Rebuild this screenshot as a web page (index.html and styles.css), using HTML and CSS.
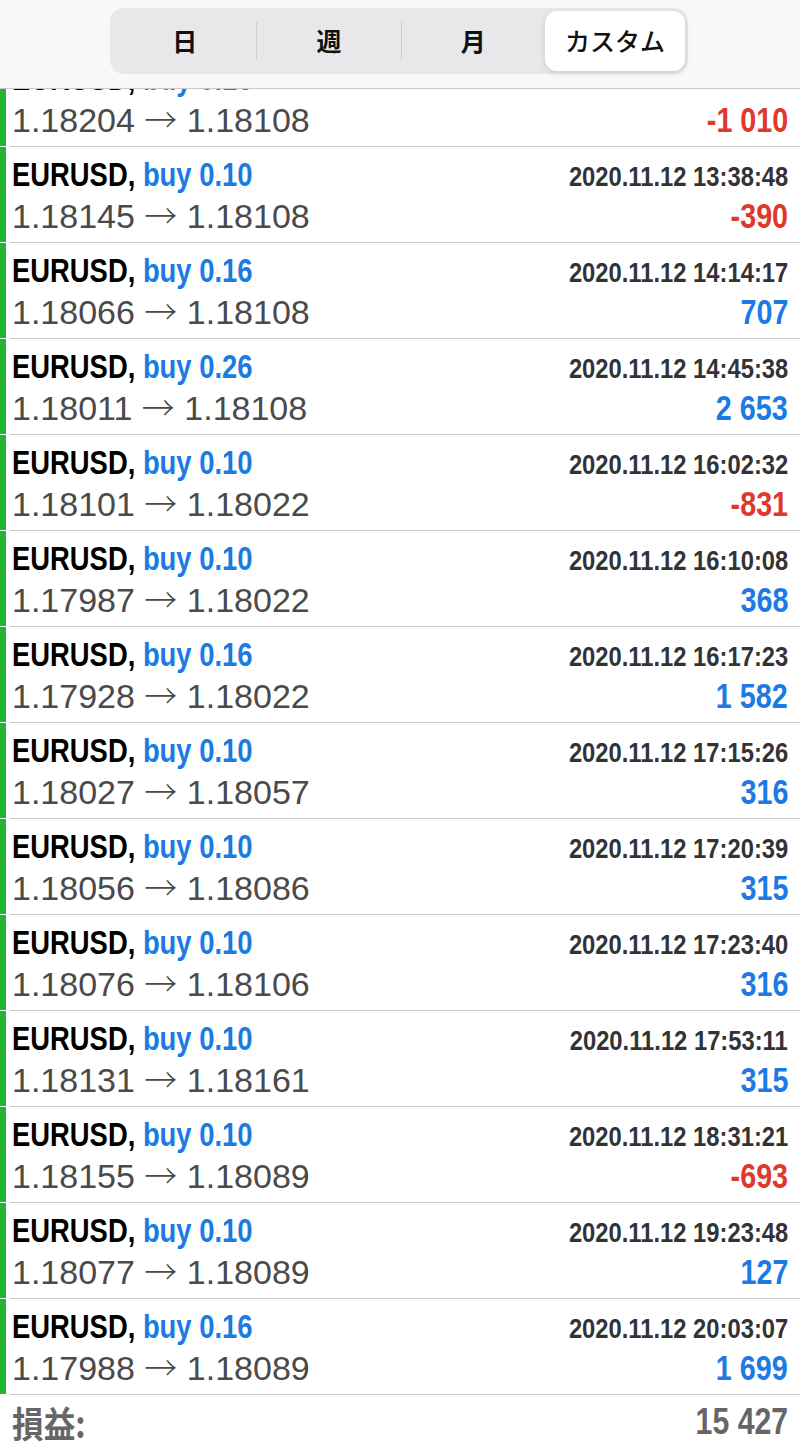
FILE: index.html
```html
<!DOCTYPE html>
<html lang="ja">
<head>
<meta charset="utf-8">
<link rel="stylesheet" href="styles.css">
</head>
<body>
<div class="page">
  <div class="list">
    <div class="row partial">
      <div class="line1"><span class="c sym">EURUSD, <span class="buy">buy 0.16</span></span><span class="c date"></span></div>
      <div class="line2"><span class="price">1.18204 <span class="arr">→</span> 1.18108</span><span class="c pl neg">-1 010</span></div>
    </div>
    <div class="row">
      <div class="line1"><span class="c sym">EURUSD, <span class="buy">buy 0.10</span></span><span class="c date">2020.11.12 13:38:48</span></div>
      <div class="line2"><span class="price">1.18145 <span class="arr">→</span> 1.18108</span><span class="c pl neg">-390</span></div>
    </div>
    <div class="row">
      <div class="line1"><span class="c sym">EURUSD, <span class="buy">buy 0.16</span></span><span class="c date">2020.11.12 14:14:17</span></div>
      <div class="line2"><span class="price">1.18066 <span class="arr">→</span> 1.18108</span><span class="c pl pos">707</span></div>
    </div>
    <div class="row">
      <div class="line1"><span class="c sym">EURUSD, <span class="buy">buy 0.26</span></span><span class="c date">2020.11.12 14:45:38</span></div>
      <div class="line2"><span class="price">1.18011 <span class="arr">→</span> 1.18108</span><span class="c pl pos">2 653</span></div>
    </div>
    <div class="row">
      <div class="line1"><span class="c sym">EURUSD, <span class="buy">buy 0.10</span></span><span class="c date">2020.11.12 16:02:32</span></div>
      <div class="line2"><span class="price">1.18101 <span class="arr">→</span> 1.18022</span><span class="c pl neg">-831</span></div>
    </div>
    <div class="row">
      <div class="line1"><span class="c sym">EURUSD, <span class="buy">buy 0.10</span></span><span class="c date">2020.11.12 16:10:08</span></div>
      <div class="line2"><span class="price">1.17987 <span class="arr">→</span> 1.18022</span><span class="c pl pos">368</span></div>
    </div>
    <div class="row">
      <div class="line1"><span class="c sym">EURUSD, <span class="buy">buy 0.16</span></span><span class="c date">2020.11.12 16:17:23</span></div>
      <div class="line2"><span class="price">1.17928 <span class="arr">→</span> 1.18022</span><span class="c pl pos">1 582</span></div>
    </div>
    <div class="row">
      <div class="line1"><span class="c sym">EURUSD, <span class="buy">buy 0.10</span></span><span class="c date">2020.11.12 17:15:26</span></div>
      <div class="line2"><span class="price">1.18027 <span class="arr">→</span> 1.18057</span><span class="c pl pos">316</span></div>
    </div>
    <div class="row">
      <div class="line1"><span class="c sym">EURUSD, <span class="buy">buy 0.10</span></span><span class="c date">2020.11.12 17:20:39</span></div>
      <div class="line2"><span class="price">1.18056 <span class="arr">→</span> 1.18086</span><span class="c pl pos">315</span></div>
    </div>
    <div class="row">
      <div class="line1"><span class="c sym">EURUSD, <span class="buy">buy 0.10</span></span><span class="c date">2020.11.12 17:23:40</span></div>
      <div class="line2"><span class="price">1.18076 <span class="arr">→</span> 1.18106</span><span class="c pl pos">316</span></div>
    </div>
    <div class="row">
      <div class="line1"><span class="c sym">EURUSD, <span class="buy">buy 0.10</span></span><span class="c date">2020.11.12 17:53:11</span></div>
      <div class="line2"><span class="price">1.18131 <span class="arr">→</span> 1.18161</span><span class="c pl pos">315</span></div>
    </div>
    <div class="row">
      <div class="line1"><span class="c sym">EURUSD, <span class="buy">buy 0.10</span></span><span class="c date">2020.11.12 18:31:21</span></div>
      <div class="line2"><span class="price">1.18155 <span class="arr">→</span> 1.18089</span><span class="c pl neg">-693</span></div>
    </div>
    <div class="row">
      <div class="line1"><span class="c sym">EURUSD, <span class="buy">buy 0.10</span></span><span class="c date">2020.11.12 19:23:48</span></div>
      <div class="line2"><span class="price">1.18077 <span class="arr">→</span> 1.18089</span><span class="c pl pos">127</span></div>
    </div>
    <div class="row">
      <div class="line1"><span class="c sym">EURUSD, <span class="buy">buy 0.16</span></span><span class="c date">2020.11.12 20:03:07</span></div>
      <div class="line2"><span class="price">1.17988 <span class="arr">→</span> 1.18089</span><span class="c pl pos">1 699</span></div>
    </div>
  </div>
  <div class="total">
    <span class="c total-label">損益:</span>
    <span class="c total-value">15 427</span>
  </div>
  <header class="topbar">
    <div class="segmented">
      <div class="seg">日</div>
      <div class="sep"></div>
      <div class="seg">週</div>
      <div class="sep"></div>
      <div class="seg">月</div>
      <div class="seg active">カスタム</div>
    </div>
  </header>
</div>
</body>
</html>
```

FILE: styles.css
```css
* { box-sizing: border-box; }
html, body { margin: 0; padding: 0; background: #fff; }
body {
  font-family: "Liberation Sans", Arial, "Noto Sans CJK JP", sans-serif;
  width: 800px;
  height: 1448px;
  overflow: hidden;
}
.page {
  position: relative;
  width: 800px;
  height: 1448px;
  overflow: hidden;
}
.list {
  margin-top: 51px;
  display: flex;
  flex-direction: column;
}
.row {
  height: 96px;
  border-bottom: 1px solid #c9c9cc;
  margin-left: 10px;
  position: relative;
  display: flex;
  flex-direction: column;
  padding: 9px 12px 0 2px;
}
.row::before {
  content: "";
  position: absolute;
  left: -10px;
  top: 0;
  bottom: 0;
  width: 6px;
  background: #1fb52c;
}
.line1, .line2 {
  display: flex;
  justify-content: space-between;
  align-items: baseline;
}
.line1 { height: 40px; }
.line2 { height: 44px; }
.c {
  display: inline-block;
  white-space: nowrap;
}
.sym {
  font-weight: 700;
  font-size: 33px;
  color: #000;
  transform: scaleX(0.83);
  transform-origin: left center;
}
.buy { color: #1b7be3; }
.date {
  font-weight: 700;
  font-size: 27px;
  color: #333336;
  transform: scaleX(0.88);
  transform-origin: right center;
}
.price {
  font-size: 34px;
  line-height: 40px;
  color: #4a4a4a;
  font-weight: 400;
}
.arr {
  font-family: "Noto Sans CJK JP", sans-serif;
  font-weight: 300;
  font-size: 33px;
  line-height: 0;
  color: #4a4a4a;
}
.pl {
  font-weight: 700;
  font-size: 35px;
  line-height: 40px;
  transform: scaleX(0.82);
  transform-origin: right center;
}
.neg { color: #dd3a2c; }
.pos { color: #1b7be3; }
.total {
  display: flex;
  justify-content: space-between;
  align-items: center;
  padding: 2px 12px 0 12px;
  height: 52px;
}
.total-label {
  font-family: "Noto Sans CJK JP", sans-serif;
  font-weight: 700;
  font-size: 36px;
  color: #666;
  transform: scaleX(0.88);
  transform-origin: left center;
}
.total-value {
  font-weight: 700;
  font-size: 36px;
  color: #666;
  transform: scaleX(0.84);
  transform-origin: right center;
}
.topbar {
  position: absolute;
  left: 0;
  top: 0;
  width: 800px;
  height: 89px;
  background: #f8f8f8;
  border-bottom: 1px solid #c9c9cc;
  display: flex;
  justify-content: center;
  padding-top: 8px;
}
.segmented {
  width: 578px;
  height: 66px;
  margin-left: -2px;
  background: #e8e8ea;
  border-radius: 14px;
  display: flex;
  align-items: center;
  padding: 3px;
}
.seg {
  flex: 1;
  height: 60px;
  display: flex;
  align-items: center;
  justify-content: center;
  font-family: "Noto Sans CJK JP", sans-serif;
  font-size: 25px;
  font-weight: 700;
  color: #111;
  padding-bottom: 2px;
}
.seg.active {
  background: #fff;
  border-radius: 12px;
  box-shadow: 0 2px 6px rgba(0,0,0,0.12);
  flex: 0 0 140px;
  font-weight: 500;
}
.sep {
  width: 1px;
  height: 38px;
  background: #cfcfd2;
}
```
